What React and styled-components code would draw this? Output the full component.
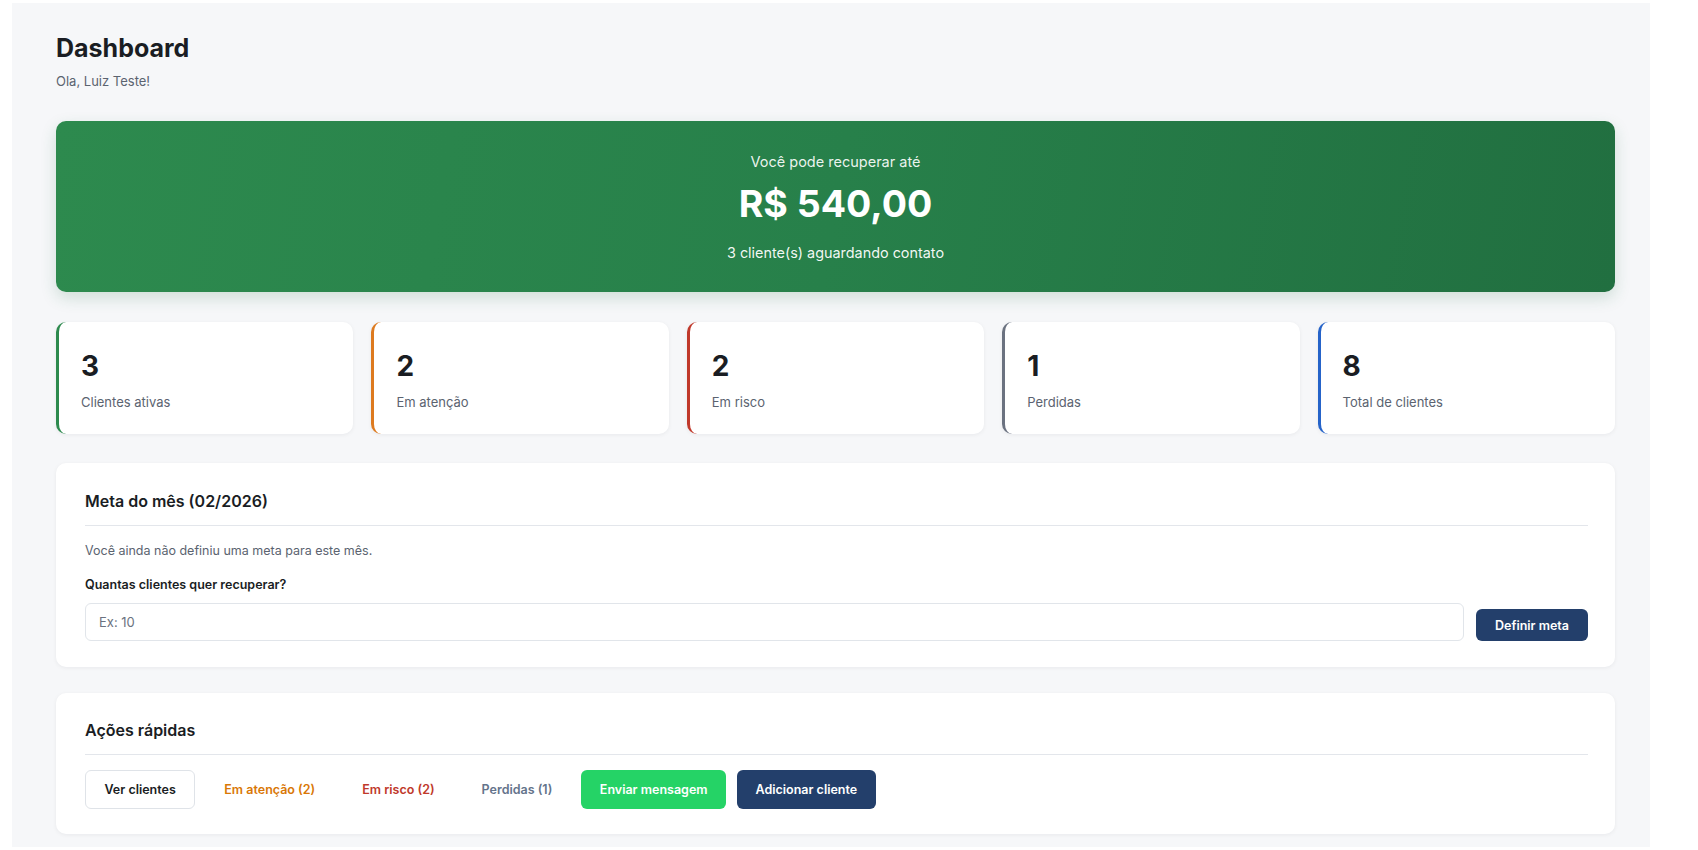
import React from "react"
import styled, { createGlobalStyle } from "styled-components"

const GlobalStyles = createGlobalStyle`
  html, body {
    margin: 0;
    padding: 0;
    background: #ffffff;
    font-family: Inter, "Noto Sans", "Liberation Sans", sans-serif;
    color: #1a1d23;
  }
  * {
    box-sizing: border-box;
  }
`

const Page = styled.div`
  margin: 3px 0 0 12px;
  width: 1638px;
  min-height: 844px;
  background-color: #f6f7f9;
  padding: 30px 35px 13px 44px;
`

const Header = styled.header`
  h1 {
    margin: 0;
    font-size: 25px;
    line-height: 30px;
    font-weight: 700;
    color: #1a1d23;
  }
  p {
    margin: 9px 0 0;
    font-size: 13px;
    line-height: 18px;
    color: #5b6370;
  }
`

const Hero = styled.section`
  margin-top: 31px;
  height: 171px;
  border-radius: 10px;
  background: linear-gradient(100deg, #2d8a4e 0%, #27804a 50%, #216f40 100%);
  box-shadow: 0 6px 16px rgba(33, 111, 64, 0.18);
  color: #fff;
  text-align: center;
  padding-top: 31px;

  .hero-label {
    margin: 0;
    font-size: 14.5px;
    line-height: 20px;
    color: rgba(255, 255, 255, 0.92);
  }
  .hero-value {
    margin: 10px 0 0;
    font-size: 37.5px;
    line-height: 44px;
    font-weight: 700;
  }
  .hero-note {
    margin: 17px 0 0;
    font-size: 14.4px;
    line-height: 20px;
    color: rgba(255, 255, 255, 0.95);
  }
`

const StatsGrid = styled.div`
  margin-top: 30px;
  display: grid;
  grid-template-columns: repeat(5, 1fr);
  gap: 18px;
`

const StatCard = styled.div`
  height: 112px;
  background: #fff;
  border-radius: 10px;
  border-left: 3px solid ${(p) => p.accent};
  box-shadow: 0 1px 4px rgba(15, 23, 42, 0.06);
  padding: 27px 22px 0;

  strong {
    display: block;
    font-size: 28px;
    line-height: 34px;
    font-weight: 700;
    color: #1a1d23;
  }
  span {
    display: block;
    margin-top: 10px;
    font-size: 13px;
    line-height: 18px;
    color: #5b6370;
  }
`

const Panel = styled.section`
  margin-top: ${(p) => p.gap || 29}px;
  background: #fff;
  border-radius: 10px;
  box-shadow: 0 1px 4px rgba(15, 23, 42, 0.06);
  padding: ${(p) => p.top || 28}px 27px ${(p) => p.bottom || 25}px 29px;
`

const PanelTitle = styled.h2`
  margin: 0;
  font-size: 16px;
  line-height: 20px;
  font-weight: 600;
  color: #1a1d23;
  padding-bottom: 14px;
  border-bottom: 1px solid #e3e6eb;
`

const Muted = styled.p`
  margin: 16px 0 0;
  font-size: 12.5px;
  line-height: 18px;
  color: #5b6370;
`

const FieldLabel = styled.label`
  display: block;
  margin-top: 16px;
  font-size: 12.5px;
  line-height: 18px;
  font-weight: 600;
  color: #1a1d23;
`

const GoalRow = styled.div`
  margin-top: 9px;
  display: flex;
  align-items: flex-end;
  gap: 12px;
`

const Input = styled.input`
  flex: 1;
  height: 38px;
  border: 1px solid #e1e5ea;
  border-radius: 6px;
  padding: 0 13px;
  font-family: inherit;
  font-size: 13px;
  color: #1a1d23;
  outline: none;

  &::placeholder {
    color: #6b7280;
  }
`

const Button = styled.button`
  height: ${(p) => p.h || 39}px;
  padding: 0 ${(p) => p.px || 17.5}px;
  border-radius: 6px;
  font-family: inherit;
  font-size: 12.5px;
  font-weight: 600;
  cursor: pointer;
  border: 1px solid transparent;
  background: transparent;
  color: #1a1d23;

  ${(p) =>
    p.variant === "navy" &&
    `
    background: #233f6b;
    color: #fff;
  `}
  ${(p) =>
    p.variant === "whatsapp" &&
    `
    background: #25d366;
    color: #fff;
  `}
  ${(p) =>
    p.variant === "outline" &&
    `
    background: #fff;
    border-color: #dfe3e8;
    color: #1a1d23;
  `}
  ${(p) =>
    p.variant === "ghost" &&
    `
    color: ${p.tone};
  `}
`

const Actions = styled.div`
  margin-top: 15px;
  display: flex;
  align-items: center;
  gap: 11px;
`

const stats = [
  { value: 3, label: "Clientes ativas", accent: "#2d8a4e" },
  { value: 2, label: "Em atenção", accent: "#dd7a1f" },
  { value: 2, label: "Em risco", accent: "#c0392b" },
  { value: 1, label: "Perdidas", accent: "#6b7280" },
  { value: 8, label: "Total de clientes", accent: "#2563c9" },
]

const App = () => {
  return (
    <>
      <GlobalStyles />
      <Page>
        <Header>
          <h1>Dashboard</h1>
          <p>Ola, Luiz Teste!</p>
        </Header>

        <Hero>
          <p className="hero-label">Você pode recuperar até</p>
          <p className="hero-value">R$ 540,00</p>
          <p className="hero-note">3 cliente(s) aguardando contato</p>
        </Hero>

        <StatsGrid>
          {stats.map((s) => (
            <StatCard key={s.label} accent={s.accent}>
              <strong>{s.value}</strong>
              <span>{s.label}</span>
            </StatCard>
          ))}
        </StatsGrid>

        <Panel gap={29} bottom={26}>
          <PanelTitle>Meta do mês (02/2026)</PanelTitle>
          <Muted>Você ainda não definiu uma meta para este mês.</Muted>
          <FieldLabel>Quantas clientes quer recuperar?</FieldLabel>
          <GoalRow>
            <Input placeholder="Ex: 10" />
            <Button variant="navy" h={32} px={18}>
              Definir meta
            </Button>
          </GoalRow>
        </Panel>

        <Panel gap={26} top={27}>
          <PanelTitle>Ações rápidas</PanelTitle>
          <Actions>
            <Button variant="outline" px={18.5}>
              Ver clientes
            </Button>
            <Button variant="ghost" tone="#d97706" px={17}>
              Em atenção (2)
            </Button>
            <Button variant="ghost" tone="#c0392b" px={17}>
              Em risco (2)
            </Button>
            <Button variant="ghost" tone="#64748b" px={17}>
              Perdidas (1)
            </Button>
            <Button variant="whatsapp">Enviar mensagem</Button>
            <Button variant="navy">Adicionar cliente</Button>
          </Actions>
        </Panel>
      </Page>
    </>
  )
}

export default App
